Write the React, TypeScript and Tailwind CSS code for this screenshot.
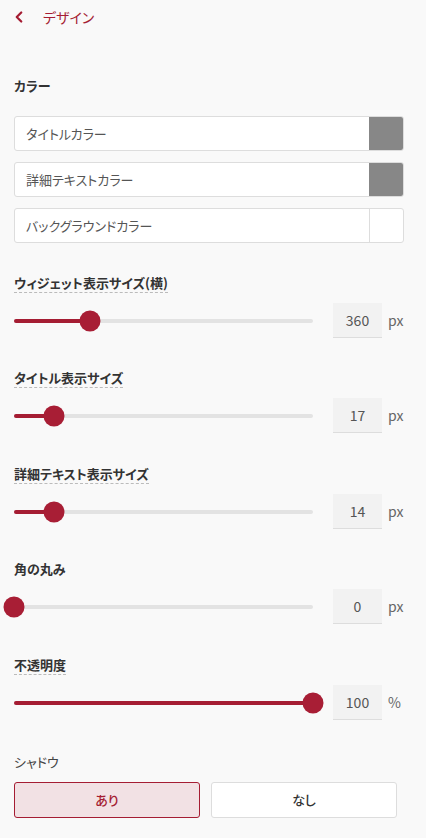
import { ChevronLeft } from 'lucide-react';

type SliderProps = {
  label: string;
  pct: number;
  value: string;
  unit: string;
  dashed?: boolean;
  top?: string;
};

function ColorField({ label, swatch }: { label: string; swatch: 'gray' | 'white' }) {
  return (
    <div className="flex h-[35px] items-stretch rounded-[3px] border border-[#dddddd] bg-white">
      <div className="flex flex-1 items-center pl-[11px] text-[13px] text-[#555555]">{label}</div>
      {swatch === 'gray' ? (
        <div className="w-[34px] rounded-r-[2px] bg-[#878787]" />
      ) : (
        <div className="w-[34px] border-l border-[#dddddd]" />
      )}
    </div>
  );
}

function SliderSection({ label, pct, value, unit, dashed = true, top = 'mt-[31px]' }: SliderProps) {
  return (
    <section className={top}>
      <div
        className={
          dashed
            ? 'w-fit border-b border-dashed border-[#bbbbbb] text-[13px] leading-[18px] font-bold text-[#333333]'
            : 'w-fit border-b border-transparent text-[13px] leading-[18px] font-bold text-[#333333]'
        }
      >
        {label}
      </div>
      <div className="mt-[10px] flex h-[35px] items-center">
        <div className="relative h-[4px] w-[299px] rounded-full bg-[#e3e3e3]">
          <div className="h-full rounded-full bg-[#a51d33]" style={{ width: `${pct}%` }} />
          <div
            className="absolute top-1/2 h-[21px] w-[21px] -translate-x-1/2 -translate-y-1/2 rounded-full bg-[#a81e35]"
            style={{ left: `${pct}%` }}
          />
        </div>
        <div className="ml-[20px] flex h-[35px] w-[49px] items-center justify-center border-b border-[#dddddd] bg-[#f2f2f2] text-[14px] text-[#555555]">
          {value}
        </div>
        <span className="ml-[6px] text-[14px] text-[#666666]">{unit}</span>
      </div>
    </section>
  );
}

export default function App() {
  return (
    <div className="min-h-[838px] w-[426px] bg-[#f9f9f9] font-['Noto_Sans_CJK_JP','Noto_Sans',sans-serif] [font-feature-settings:'palt']">
      <header className="flex h-[34px] items-center px-[10px]">
        <ChevronLeft className="h-[18px] w-[18px] text-[#a51d33]" strokeWidth={3} />
        <span className="ml-[15px] text-[14px] text-[#a51d33]">デザイン</span>
      </header>

      <div className="px-[14px] pb-[20px]">
        <h2 className="mt-[42px] text-[13px] leading-[20px] font-bold text-[#333333]">カラー</h2>
        <div className="mt-[20px] flex w-[390px] flex-col gap-[11px]">
          <ColorField label="タイトルカラー" swatch="gray" />
          <ColorField label="詳細テキストカラー" swatch="gray" />
          <ColorField label="バックグラウンドカラー" swatch="white" />
        </div>

        <SliderSection label="ウィジェット表示サイズ(横)" pct={25.4} value="360" unit="px" />
        <SliderSection label="タイトル表示サイズ" pct={13.4} value="17" unit="px" />
        <SliderSection label="詳細テキスト表示サイズ" pct={13.4} value="14" unit="px" top="mt-[32px]" />
        <SliderSection label="角の丸み" pct={0} value="0" unit="px" dashed={false} />
        <SliderSection label="不透明度" pct={100} value="100" unit="%" top="mt-[32px]" />

        <section className="mt-[32px]">
          <div className="text-[13px] leading-[20px] text-[#444444]">シャドウ</div>
          <div className="mt-[10px] flex gap-[11px]">
            <button className="h-[36px] w-[186px] rounded-[3px] border border-[#a51d33] bg-[#f2e1e4] text-[13px] font-medium text-[#a51d33]">
              あり
            </button>
            <button className="h-[36px] w-[186px] rounded-[3px] border border-[#dddddd] bg-white text-[13px] font-medium text-[#333333]">
              なし
            </button>
          </div>
        </section>
      </div>
    </div>
  );
}
